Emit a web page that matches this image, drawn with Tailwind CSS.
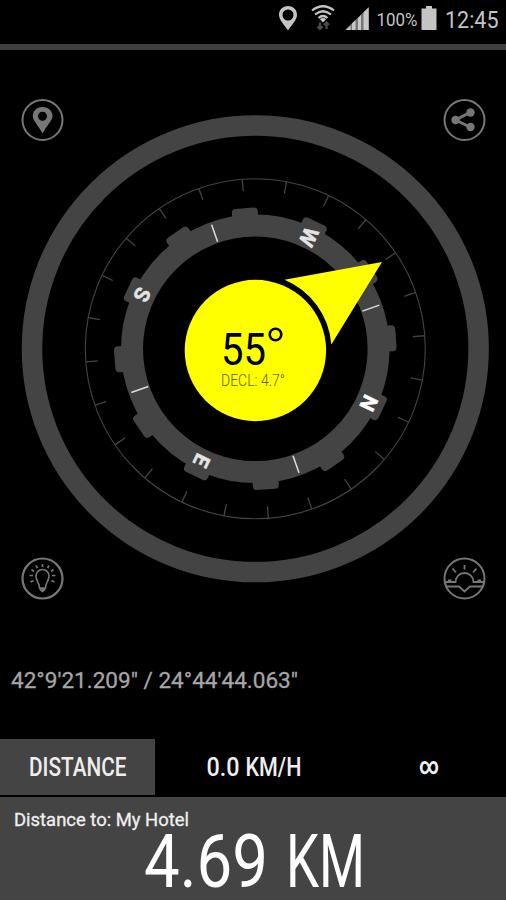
<!DOCTYPE html>
<html lang="en">
<head>
    <meta charset="UTF-8">
    <meta name="viewport" content="width=device-width, initial-scale=1.0">
    <title>Compass</title>
    <script src="https://cdn.jsdelivr.net/npm/@tailwindcss/browser@4"></script>
</head>
<body class="bg-black font-['Roboto',sans-serif]">
    <div class="w-[506px] h-[900px] flex flex-col overflow-hidden bg-black">
        <!-- Status bar -->
        <header class="h-[50px] shrink-0 border-b-[6px] border-[#404040] flex items-start justify-end pt-[5px] pr-[7px] text-[#c4c4c4]">
            <svg class="w-5 h-[26px] mr-[13px]" viewBox="0 0 20 26" fill="currentColor">
                <path fill-rule="evenodd" d="M10 1C4.800 1 1 4.800 1 9.800C1 15 6 19.500 10 25.500C14 19.500 19 15 19 9.800C19 4.800 15.200 1 10 1ZM10 4.500A5.500 5.500 0 1 1 10 15.500A5.500 5.500 0 1 1 10 4.500Z"/>
            </svg>
            <svg class="w-6 h-[26px] mr-[10px]" viewBox="0 0 24 26" fill="none" stroke="currentColor" stroke-width="2.200">
                <path d="M1 5.500Q12 -3 23 5.500M4 9.500Q12 3 20 9.500M7.500 13Q12 9 16.500 13"/>
                <path d="M8.800 14.200Q12 12 15.200 14.200L12 17.500Z" fill="currentColor" stroke="none"/>
                <path d="M9 17.500V24M6.500 21.500L9 24L11.500 21.500M15.500 24V17.500M13 20L15.500 17.500L18 20" stroke="#4c4c4c"/>
            </svg>
            <svg class="w-6 h-[26px] mr-[7px]" viewBox="0 0 24 26">
                <path d="M0 25L24 2V25Z" fill="#777"/>
                <path d="M1 25L5.500 20.500V25ZM7 25V18.500L10.500 15V25ZM13 25V13L16 10V25ZM18.500 25V7.500L23.500 2.500V25Z" fill="#c8c8c8"/>
            </svg>
            <svg class="w-[42px] h-[26px] mr-[3px]" viewBox="0 0 42 26" fill="currentColor">
                <text x="0.500" y="20.500" font-size="17.500" textLength="41" lengthAdjust="spacingAndGlyphs">100%</text>
            </svg>
            <svg class="w-4 h-[26px] mr-[8px]" viewBox="0 0 16 26" fill="currentColor">
                <path d="M5 1H11V3.500H15.500V25H0.500V3.500H5Z"/>
            </svg>
            <svg class="w-[54px] h-[26px] overflow-visible" viewBox="0 0 54 26" fill="currentColor">
                <text x="0" y="22.500" font-size="23.500" textLength="53.500" lengthAdjust="spacingAndGlyphs">12:45</text>
            </svg>
        </header>

        <!-- Compass -->
        <main class="relative h-[570px] shrink-0 flex flex-col justify-between pl-[21px] pr-5 pt-[49px] pb-5">
            <svg class="absolute inset-0 w-[506px] h-[570px]" viewBox="0 50 506 570">
                <g fill="none" stroke="#444">
                    <circle cx="255.300" cy="348.800" r="223.300" stroke-width="20.500"/>
                    <circle cx="255.300" cy="348.800" r="170" stroke-width="1.100"/>
                    <circle cx="255.300" cy="348.800" r="123.300" stroke-width="22"/>
                </g>
                <!-- dial, drawn north up and turned to the heading -->
                <g transform="translate(255.300 348.800) rotate(115.600)">
                    <g id="dial"></g>
                    <g fill="#fff" stroke="#fff" stroke-width="0.500" font-size="21" font-weight="700" text-anchor="middle">
                        <text x="0" y="-118.500">N</text>
                        <g fill="#e4e4e4" stroke="#e4e4e4">
                            <text x="124" y="7.500">E</text>
                            <text x="0" y="133">S</text>
                            <text x="-124" y="7.500">W</text>
                        </g>
                    </g>
                </g>
                <circle cx="255.400" cy="350.500" r="70.700" fill="#ff0"/>
                <path d="M382 262L331.300 344.500A76.200 76.200 0 0 0 284.500 279.800Z" fill="#ff0"/>
                <text x="221" y="365" font-size="43.500" textLength="45" lengthAdjust="spacingAndGlyphs">55</text>
                <circle cx="275.500" cy="334.500" r="5.800" fill="none" stroke="#000" stroke-width="2.600"/>
                <text x="221" y="385.500" font-size="16" font-weight="300" fill="#5c5c00" textLength="64" lengthAdjust="spacingAndGlyphs">DECL: 4.7°</text>
            </svg>
            <div class="relative flex justify-between text-[#777]">
                <button aria-label="Location">
                    <svg class="w-[43px] h-[43px]" viewBox="0 0 43 43" fill="none">
                        <circle cx="21.500" cy="21" r="20" stroke="currentColor" stroke-width="2"/>
                        <path fill="currentColor" fill-rule="evenodd" d="M21.500 8C15.500 8 11.800 12 11.800 17C11.800 21.500 17 26 21.500 34.500C26 26 31.500 21.500 31.500 17C31.500 12 27.500 8 21.500 8ZM21.500 12.800A4.500 4.500 0 1 1 21.500 21.800A4.500 4.500 0 1 1 21.500 12.800Z"/>
                    </svg>
                </button>
                <button aria-label="Share">
                    <svg class="w-[43px] h-[43px]" viewBox="0 0 43 43" fill="none" stroke="currentColor">
                        <circle cx="21.500" cy="21" r="20" stroke-width="2"/>
                        <path d="M27 13.500L12.500 21L27 28" stroke-width="3"/>
                        <g fill="currentColor" stroke="none">
                            <circle cx="12.500" cy="21" r="4.200"/>
                            <circle cx="27.500" cy="13.500" r="4.200"/>
                            <circle cx="27.500" cy="28" r="4.200"/>
                        </g>
                    </svg>
                </button>
            </div>
            <div class="relative flex justify-between text-[#777]">
                <button aria-label="Light">
                    <svg class="w-[43px] h-[43px]" viewBox="0 0 43 43" fill="none" stroke="currentColor">
                        <circle cx="21.500" cy="21.500" r="20" stroke-width="2.200"/>
                        <path d="M18.500 31C18.500 25.500 15 24 15 19A6.500 6.500 0 0 1 28 19C28 24 24.500 25.500 24.500 31Z" stroke-width="1.600"/>
                        <path d="M18.500 31H24.500V33L21.500 35.500L18.500 33Z" fill="currentColor" stroke="none"/>
                        <path d="M21.500 7V10M15 8.500L16.500 11M28 8.500L26.500 11M10.500 12.500L13 14.500M32.500 12.500L30 14.500M8.500 18.500H12M34.500 18.500H31M9.500 25L12.500 23.500M33.500 25L30.500 23.500" stroke-width="1.700"/>
                    </svg>
                </button>
                <button aria-label="Sunrise and sunset">
                    <svg class="w-[43px] h-[43px]" viewBox="0 0 43 43" fill="none" stroke="currentColor">
                        <circle cx="21.500" cy="21.500" r="20" stroke-width="2"/>
                        <path d="M2 25H12.500A9 9 0 0 1 30.500 25H41M3 29.500H16L21.500 34.500L27 29.500H40" stroke-width="1.800"/>
                        <path d="M21.500 8V12.500M9.500 11.500L13 15.500M33.500 11.500L30 15.500M5 23.500H8.500M34.500 23.500H38" stroke-width="1.800"/>
                    </svg>
                </button>
            </div>
        </main>

        <!-- Coordinates -->
        <div class="h-[119px] shrink-0 pt-[45px] pl-[11px]">
            <svg class="w-[290px] h-[30px]" viewBox="0 0 290 30" fill="#a6a6a6" stroke="#a6a6a6" stroke-width="0.300">
                <text x="0" y="22.500" font-size="22.500" textLength="287" lengthAdjust="spacingAndGlyphs">42°9'21.209" / 24°44'44.063"</text>
            </svg>
        </div>

        <!-- Tabs -->
        <nav class="h-[58px] shrink-0 flex items-start text-[#eee]">
            <div class="w-[155px] h-14 bg-[#444]">
                <svg class="w-[155px] h-14" viewBox="0 0 155 56" fill="currentColor">
                    <text x="29" y="37" font-size="26" font-weight="500" textLength="97.500" lengthAdjust="spacingAndGlyphs">DISTANCE</text>
                </svg>
            </div>
            <div class="w-[197px] h-14">
                <svg class="w-[197px] h-14" viewBox="0 0 197 56" fill="currentColor">
                    <text x="51.500" y="37" font-size="26" font-weight="500" textLength="33" lengthAdjust="spacingAndGlyphs">0.0</text>
                    <text x="90.500" y="37" font-size="26" font-weight="500" textLength="56" lengthAdjust="spacingAndGlyphs">KM/H</text>
                </svg>
            </div>
            <div class="flex-1 h-14">
                <svg class="w-[154px] h-14" viewBox="0 0 154 56" fill="currentColor">
                    <text x="67" y="35" font-size="24" font-weight="700" textLength="20" lengthAdjust="spacingAndGlyphs">∞</text>
                </svg>
            </div>
        </nav>

        <!-- Distance panel -->
        <section class="h-[103px] shrink-0 bg-[#444]">
            <svg class="block w-[506px] h-[103px] overflow-visible" viewBox="0 0 506 103" fill="#fff">
                <text x="14" y="29" font-size="19" fill="#f0f0f0" stroke="#f0f0f0" stroke-width="0.300" textLength="175" lengthAdjust="spacingAndGlyphs">Distance to: My Hotel</text>
                <text x="144" y="90" font-size="74.500" textLength="124" lengthAdjust="spacingAndGlyphs">4.69</text>
                <text x="286" y="90" font-size="74.500" textLength="79" lengthAdjust="spacingAndGlyphs">KM</text>
            </svg>
        </section>
    </div>

    <script>
        const dial = document.getElementById('dial');
        let marks = '';
        // scale ticks every 15 degrees
        for (let a = 0; a < 360; a += 15) {
            marks += `<path d="M0 -170V-158" stroke="#444" stroke-width="1.300" transform="rotate(${a})"/>`;
        }
        // bezel notches every 30 degrees
        for (let a = 0; a < 360; a += 30) {
            marks += `<rect x="-13" y="-141" width="26" height="16" rx="4" fill="#444" transform="rotate(${a})"/>`;
        }
        // white marks between the cardinal points
        for (let a = 45; a < 360; a += 90) {
            marks += `<path d="M0 -131.500V-113.500" stroke="#ddd" stroke-width="1.500" transform="rotate(${a})"/>`;
        }
        dial.innerHTML = marks;
    </script>
</body>
</html>
